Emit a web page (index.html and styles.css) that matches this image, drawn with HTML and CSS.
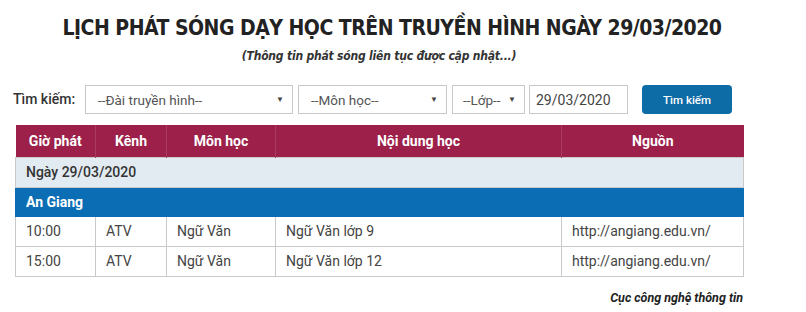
FILE: index.html
```html
<!DOCTYPE html>
<html lang="vi">
<head>
<meta charset="utf-8">
<title>Lịch phát sóng</title>
<link rel="stylesheet" href="styles.css">
</head>
<body>
<div class="page">
  <h1 class="title">LỊCH PHÁT SÓNG DẠY HỌC TRÊN TRUYỀN HÌNH NGÀY 29/03/2020</h1>
  <p class="subtitle">(Thông tin phát sóng liên tục được cập nhật...)</p>
  <div class="search">
    <span class="label">Tìm kiếm:</span>
    <div class="select w1"><span>--Đài truyền hình--</span><span class="arrow">▼</span></div>
    <div class="select w2"><span>--Môn học--</span><span class="arrow">▼</span></div>
    <div class="select w3"><span>--Lớp--</span><span class="arrow">▼</span></div>
    <div class="date">29/03/2020</div>
    <button class="btn">Tìm kiếm</button>
  </div>
  <table class="sched">
    <colgroup>
      <col class="c1"><col class="c2"><col class="c3"><col class="c4"><col class="c5">
    </colgroup>
    <thead>
      <tr><th>Giờ phát</th><th>Kênh</th><th>Môn học</th><th>Nội dung học</th><th>Nguồn</th></tr>
    </thead>
    <tbody>
      <tr class="day"><td colspan="5">Ngày 29/03/2020</td></tr>
      <tr class="prov"><td colspan="5">An Giang</td></tr>
      <tr><td>10:00</td><td>ATV</td><td>Ngữ Văn</td><td>Ngữ Văn lớp 9</td><td>http://angiang.edu.vn/</td></tr>
      <tr><td>15:00</td><td>ATV</td><td>Ngữ Văn</td><td>Ngữ Văn lớp 12</td><td>http://angiang.edu.vn/</td></tr>
    </tbody>
  </table>
  <p class="footer">Cục công nghệ thông tin</p>
</div>
</body>
</html>
```

FILE: styles.css
```css
* { box-sizing: border-box; }
html, body { margin: 0; padding: 0; background: #fff; }
body { font-family: Roboto, "Liberation Sans", Arial, sans-serif; color: #333; }
.page { width: 758px; padding: 0 15px; }
.title {
  margin: 0;
  padding: 15px 0 0 0;
  text-align: center;
  white-space: nowrap;
  font-family: "DejaVu Sans Condensed", Roboto, sans-serif;
  font-stretch: condensed;
  font-weight: 700;
  font-size: 21px;
  letter-spacing: -0.5px;
  line-height: 26px;
  color: #222;
  position: relative;
  left: 13px;
}
.subtitle {
  margin: 6px 0 0 0;
  text-align: center;
  white-space: nowrap;
  font-family: "DejaVu Sans Condensed", Roboto, sans-serif;
  font-stretch: condensed;
  font-style: italic;
  font-weight: 700;
  font-size: 12px;
  letter-spacing: -0.2px;
  line-height: 18px;
  color: #333;
}
.search {
  display: flex;
  align-items: center;
  margin-top: 20px;
  margin-left: -2px;
  height: 29px;
}
.label { font-size: 14px; font-weight: 500; color: #333; width: 72px; margin-top: -2px; }
.select, .date {
  height: 29px;
  border: 1px solid #c8c8c8;
  background: #fff;
  display: flex;
  align-items: center;
  font-size: 13.5px;
  color: #555;
  padding: 0 0 0 12px;
}
.select { justify-content: space-between; padding-right: 8px; margin-right: 5px; }
.arrow { font-size: 8px; color: #444; }
.w1 { width: 208px; }
.w2 { width: 149px; }
.w3 { width: 73px; margin-right: 4px; padding-left: 10px; }
.date { width: 99px; padding-left: 6px; font-size: 14px; color: #444; }
.btn {
  margin-left: 14px;
  width: 90px;
  height: 29px;
  border: 0;
  border-radius: 4px;
  background: #0d6ba5;
  color: #fff;
  font-family: Roboto, sans-serif;
  font-size: 11.5px;
  font-weight: 500;
}
.sched {
  margin-top: 11px;
  width: 728px;
  border-collapse: collapse;
  table-layout: fixed;
  font-size: 14px;
}
.c1 { width: 80px; }
.c2 { width: 71px; }
.c3 { width: 109px; }
.c4 { width: 286px; }
.c5 { width: 182px; }
.sched th {
  background: #9c2049;
  color: #fff;
  font-weight: 700;
  height: 32px;
  padding: 0;
  text-align: center;
  border-right: 1px solid #a83a5e;
}
.sched th:last-child { border-right: 0; }
.sched td {
  height: 30px;
  padding: 0 10px;
  border: 1px solid #c9c9c9;
  color: #444;
  white-space: nowrap;
}
.sched tr.day td { background: #e3ebf2; font-weight: 500; color: #333; }
.sched tr.prov td { background: #0b6eb5; color: #fff; font-weight: 700; height: 29px; border-color: #0b6eb5; }
.footer {
  margin: 13px 0 0 0;
  width: 728px;
  text-align: right;
  font-size: 12.5px;
  line-height: 16px;
  font-style: italic;
  font-weight: 700;
  color: #222;
}
```
